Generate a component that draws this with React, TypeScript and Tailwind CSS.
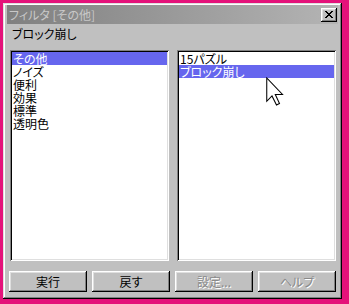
import React from "react";

const raised =
  "shadow-[inset_-1px_-1px_0_#000,inset_1px_1px_0_#fff,inset_-2px_-2px_0_#808080,inset_2px_2px_0_#dfdfdf]";
const sunken =
  "shadow-[inset_1px_1px_0_#808080,inset_-1px_-1px_0_#fff,inset_2px_2px_0_#000,inset_-2px_-2px_0_#dfdfdf]";

function ListBox({ items, selected }: { items: string[]; selected: number }) {
  return (
    <div className={`bg-white h-[211px] p-[2px] ${sunken}`}>
      <div className="flex flex-col">
        {items.map((it, i) => (
          <div
            key={it}
            className={`h-[13px] leading-[13px] pl-[1px] whitespace-nowrap ${
              i === selected ? "bg-[#6666ee] text-white" : "text-black"
            }`}
          >
            {it}
          </div>
        ))}
      </div>
    </div>
  );
}

function Btn({ label, disabled }: { label: string; disabled?: boolean }) {
  return (
    <div
      className={`h-[21px] bg-[#c0c0c0] flex items-center justify-center ${raised} ${
        disabled ? "text-[#8a8a8a] [text-shadow:1px_1px_0_#ffffff]" : "text-black"
      }`}
    >
      {label}
    </div>
  );
}

export default function App() {
  return (
    <div
      className="relative w-[349px] h-[304px] bg-[#e4127a] pl-[3px] pt-[3px] overflow-hidden text-[12px] [font-family:'Noto_Sans_CJK_JP',sans-serif] [font-feature-settings:'palt']"
    >
      <div
        className={`w-[339px] h-[296px] bg-[#c0c0c0] p-[2px] flex flex-col shadow-[inset_-1px_-1px_0_#000,inset_1px_1px_0_#dfdfdf,inset_-2px_-2px_0_#808080,inset_2px_2px_0_#fff]`}
      >
        <div className="px-[2px]">
          <div className="h-[19px] bg-gradient-to-r from-[#808080] to-[#b4b4b4] flex items-center justify-between pl-[2px] pr-[1px]">
            <span className="text-[#c8c8c8] leading-none">フィルタ [その他]</span>
            <div
              className={`w-[16px] h-[14px] bg-[#c0c0c0] flex items-center justify-center ${raised}`}
            >
              <svg width="8" height="7" viewBox="0 0 8 7">
                <path
                  d="M0 0h2v1h1v1h2V1h1V0h2v1H7v1H6v1H5v1h1v1h1v1h1v1H6V6H5V5H3v1H2v1H0V6h1V5h1V4h1V3H2V2H1V1H0z"
                  fill="#000"
                />
              </svg>
            </div>
          </div>
        </div>
        <div className="flex-1 flex flex-col px-[4px]">
          <div className="h-[20px] pl-[3px] pt-[2px] leading-[16px] text-black">ブロック崩し</div>
          <div className="mt-[6px] ml-[1px] grid grid-cols-2 gap-[8px]">
            <ListBox items={["その他", "ノイズ", "便利", "効果", "標準", "透明色"]} selected={0} />
            <ListBox items={["15パズル", "ブロック崩し"]} selected={1} />
          </div>
          <div className="mt-[10px] grid grid-cols-4 gap-[5px]">
            <Btn label="実行" />
            <Btn label="戻す" />
            <Btn label="設定..." disabled />
            <Btn label="ヘルプ" disabled />
          </div>
        </div>
      </div>
      <svg
        className="absolute left-[266px] top-[77px]"
        width="18"
        height="29"
        viewBox="0 0 12 19"
      >
        <path
          d="M0.5 0.5 L0.5 16 L4 12.5 L7 18.5 L9 17.5 L6.2 11.5 L11 11.5 Z"
          fill="#fff"
          stroke="#000"
          strokeWidth="0.7"
          strokeLinejoin="miter"
        />
      </svg>
    </div>
  );
}
